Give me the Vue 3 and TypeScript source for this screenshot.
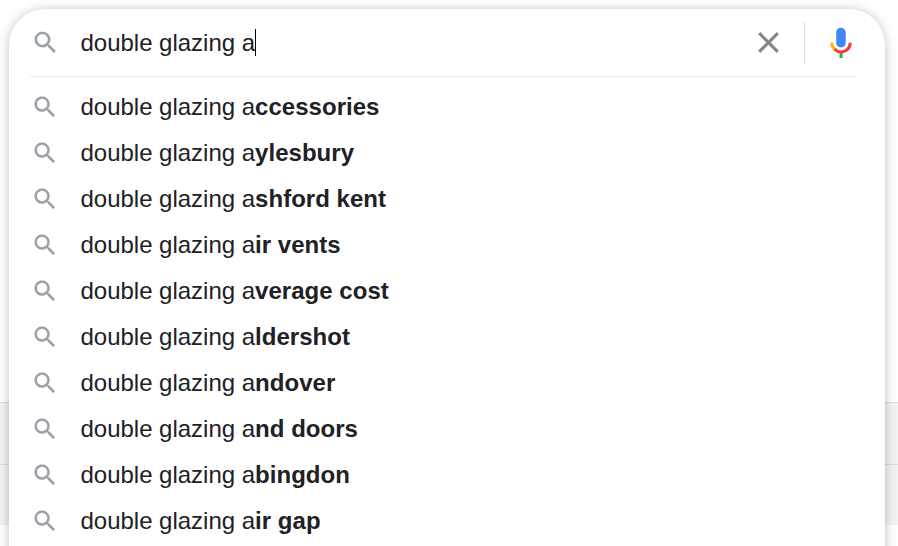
<script setup lang="ts">
const query = 'double glazing a'
const suggestions: string[] = ['ccessories', 'ylesbury', 'shford kent', 'ir vents', 'verage cost', 'ldershot', 'ndover', 'nd doors', 'bingdon', 'ir gap']
const lens = 'M15.5 14h-.79l-.28-.27A6.471 6.471 0 0 0 16 9.5 6.5 6.5 0 1 0 9.5 16c1.61 0 3.09-.59 4.23-1.57l.27.28v.79l5 4.99L20.49 19l-4.99-5zm-6 0C7.01 14 5 11.99 5 9.5S7.01 5 9.5 5 14 7.01 14 9.5 11.99 14 9.5 14z'
</script>

<template>
  <main class="page">
    <div class="footer"><div class="country"></div></div>
    <section class="panel">
      <div class="search">
        <svg class="lens" viewBox="0 0 24 24"><path :d="lens" /></svg>
        <span class="text">{{ query }}</span><i class="caret"></i>
        <svg class="clear" viewBox="0 0 24 24"><path d="M19 6.41 17.59 5 12 10.59 6.41 5 5 6.41 10.59 12 5 17.59 6.41 19 12 13.41 17.59 19 19 17.59 13.41 12z" /></svg>
        <i class="separator"></i>
        <svg class="mic" viewBox="0 0 24 24">
          <path fill="#4285f4" d="M12 15c1.74 0 3.15-1.31 3.15-2.97V4.97A3.1 3.1 0 0 0 12 1.9C10.26 1.9 8.85 3.31 8.85 4.97v7.06C8.85 13.69 10.26 15 12 15z" />
          <path fill="#34a853" d="M11 18.08h2V22h-2z" />
          <path fill="#fbbc05" d="M7.05 16.87C5.7 15.54 4.8 14.04 4.8 11.9h2.1c0 1.45.66 2.52 1.57 3.48v.32l-1.15 1.18z" />
          <path fill="#ea4335" d="M12 16.93a4.97 5.25 0 0 1-3.54-1.55l-1.41 1.49C8.31 18.21 10.07 19 12 19c3.97 0 7.2-2.92 7.2-7.1h-2.1c0 2.92-2.34 5.03-5.1 5.03z" />
        </svg>
      </div>
      <ul class="list">
        <li v-for="item in suggestions" :key="item">
          <svg class="lens" viewBox="0 0 24 24"><path :d="lens" /></svg>
          <span class="text">{{ query }}<b>{{ item }}</b></span>
        </li>
      </ul>
    </section>
  </main>
</template>

<style>
body { overflow: hidden; }
</style>
<style scoped>
.page { position: relative; box-sizing: border-box; height: 546px; padding: 9px 13px 0 9px; overflow: hidden; background: #fff; font-family: "Liberation Sans", Arial, sans-serif; }
.footer { position: absolute; top: 402px; left: 0; right: 0; height: 123px; background: #f2f2f2; border-top: 1px solid #dadce0; box-sizing: border-box; }
.country { height: 61px; border-bottom: 1px solid #dadce0; }
.panel { position: relative; height: 600px; border-radius: 36px; background: #fff; box-shadow: 0 1px 11px rgba(32, 33, 36, .28); }
.search { display: flex; align-items: center; box-sizing: border-box; height: 68px; margin: 0 26px 0 21px; padding: 0 0 1px 1.3px; background: linear-gradient(#e8eaed, #e8eaed) left bottom / calc(100% - 4px) 1px no-repeat; }
.lens { flex: none; width: 29px; height: 29px; fill: #9aa0a6; stroke: #9aa0a6; stroke-width: .2; }
.search .lens { margin-right: 20.2px; }
.list .lens { width: 28px; height: 28px; margin: 0 0 1px .5px; }
.text { font-size: 24px; line-height: 30px; color: #202124; white-space: pre; letter-spacing: -.015px; }
.caret { width: 1px; height: 27px; margin-left: -.5px; background: #000; }
.clear { flex: none; width: 35px; height: 35px; margin-left: auto; margin-right: .5px; fill: #80868b; stroke: #80868b; stroke-width: .25; }
.separator { width: 1px; height: 42px; margin: 0 18px; background: #dadce0; }
.mic { flex: none; width: 36px; height: 36px; }
.list { margin: 0; padding: 7px 0 0 21.3px; list-style: none; }
li { display: flex; align-items: center; height: 46px; gap: 21.7px; }
b { font-weight: 700; letter-spacing: .03px; }
</style>
